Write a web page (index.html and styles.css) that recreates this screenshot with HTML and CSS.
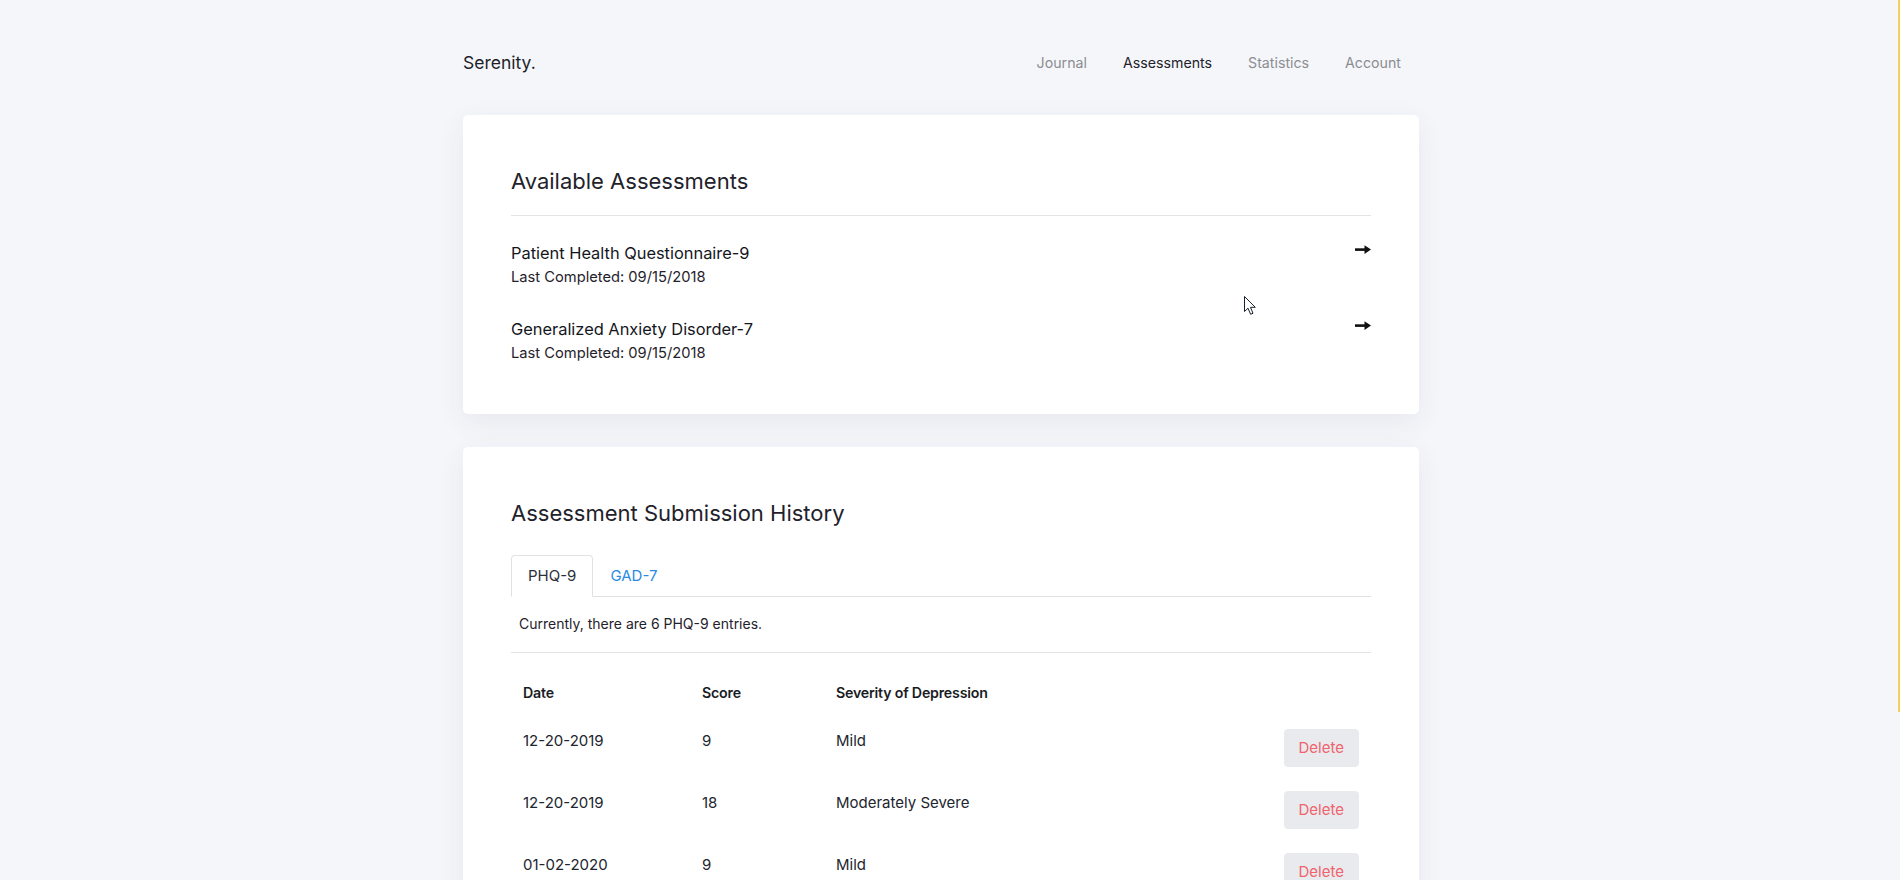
FILE: index.html
```html
<!DOCTYPE html>
<html lang="en">
<head>
<meta charset="utf-8">
<title>Serenity. — Assessments</title>
<link rel="stylesheet" href="styles.css">
</head>
<body>
<div class="page">
  <div class="container">
    <header class="topbar">
      <div class="logo">Serenity.</div>
      <nav class="nav">
        <a class="nav-link">Journal</a>
        <a class="nav-link active">Assessments</a>
        <a class="nav-link">Statistics</a>
        <a class="nav-link">Account</a>
      </nav>
    </header>

    <section class="card">
      <h2 class="card-title">Available Assessments</h2>
      <hr class="divider">
      <ul class="assess-list">
        <li class="assess-item">
          <div class="assess-text">
            <div class="assess-name">Patient Health Questionnaire-9</div>
            <div class="assess-meta">Last Completed: 09/15/2018</div>
          </div>
          <svg class="arrow" width="16" height="9" viewBox="0 0 16 9"><rect x="0" y="3.3" width="11" height="2.6" fill="#111"/><path d="M9.5 0.3 L16 4.6 L9.5 8.9 Z" fill="#111"/></svg>
        </li>
        <li class="assess-item">
          <div class="assess-text">
            <div class="assess-name">Generalized Anxiety Disorder-7</div>
            <div class="assess-meta">Last Completed: 09/15/2018</div>
          </div>
          <svg class="arrow" width="16" height="9" viewBox="0 0 16 9"><rect x="0" y="3.3" width="11" height="2.6" fill="#111"/><path d="M9.5 0.3 L16 4.6 L9.5 8.9 Z" fill="#111"/></svg>
        </li>
      </ul>
    </section>

    <section class="card">
      <h2 class="card-title">Assessment Submission History</h2>
      <div class="tabs">
        <a class="tab active">PHQ-9</a>
        <a class="tab">GAD-7</a>
      </div>
      <p class="count">Currently, there are 6 PHQ-9 entries.</p>
      <hr class="divider tight">
      <table class="history">
        <thead>
          <tr><th class="c-date">Date</th><th class="c-score">Score</th><th>Severity of Depression</th><th></th></tr>
        </thead>
        <tbody>
          <tr><td>12-20-2019</td><td>9</td><td>Mild</td><td class="c-act"><button class="btn-delete">Delete</button></td></tr>
          <tr><td>12-20-2019</td><td>18</td><td>Moderately Severe</td><td class="c-act"><button class="btn-delete">Delete</button></td></tr>
          <tr><td>01-02-2020</td><td>9</td><td>Mild</td><td class="c-act"><button class="btn-delete">Delete</button></td></tr>
          <tr><td>01-15-2020</td><td>12</td><td>Moderate</td><td class="c-act"><button class="btn-delete">Delete</button></td></tr>
          <tr><td>02-03-2020</td><td>7</td><td>Mild</td><td class="c-act"><button class="btn-delete">Delete</button></td></tr>
          <tr><td>02-20-2020</td><td>4</td><td>Minimal</td><td class="c-act"><button class="btn-delete">Delete</button></td></tr>
        </tbody>
      </table>
    </section>
  </div>
</div>

<svg class="cursor" width="13" height="20" viewBox="0 0 13 20"><path d="M0.5 0.5 L0.5 15.5 L4 12.2 L6.6 18.3 L9 17.3 L6.5 11.3 L11.3 11.3 Z" fill="#fff" stroke="#1a1f2c" stroke-width="1" stroke-linejoin="round"/></svg>
<div class="scroll-thumb"></div>
</body>
</html>
```

FILE: styles.css
```css
html {
  overflow: hidden;
}

body {
  margin: 0;
  background: #f5f6fa;
  font-family: Inter, "Noto Sans", "Liberation Sans", sans-serif;
  font-size: 15px;
  line-height: 24px;
  color: #1f222b;
}

.page {
  padding-right: 18px;
}

.container {
  width: 956px;
  margin: 0 auto;
}

.topbar {
  display: flex;
  align-items: center;
  justify-content: space-between;
  height: 48px;
  padding-top: 39px;
  margin-bottom: 28px;
}

.logo {
  font-size: 17.5px;
  color: #1c1f2a;
}

.nav {
  display: flex;
}

.nav-link {
  padding: 0 18px;
  font-size: 14.2px;
  color: #8b8d93;
  text-decoration: none;
}

.nav-link.active {
  color: #1f222b;
}

.card {
  background: #fff;
  border-radius: 5px;
  box-shadow: 0 8px 28px rgba(40, 50, 90, 0.07);
  padding: 48px 48px 48px;
  margin-bottom: 33px;
}

.card-title {
  margin: 0 0 16px;
  font-size: 22px;
  font-weight: 400;
  line-height: 36px;
  color: #1f222b;
}

.divider {
  border: 0;
  border-top: 1px solid #e3e4e8;
  margin: 0 0 25px;
}

.assess-list {
  list-style: none;
  margin: 0;
  padding: 0;
  display: flex;
  flex-direction: column;
  gap: 27px;
}

.assess-item {
  display: flex;
  justify-content: space-between;
  align-items: flex-start;
}

.assess-name {
  font-size: 16.4px;
  line-height: 24px;
  color: #14161d;
}

.assess-meta {
  font-size: 14.7px;
  line-height: 25px;
  color: #1f222b;
}

.arrow {
  margin-top: 4px;
}

.tabs {
  display: flex;
  margin-top: 24px;
  border-bottom: 1px solid #dfe1e5;
}

.tab {
  padding: 8px 16px;
  margin-bottom: -1px;
  border: 1px solid transparent;
  border-radius: 4px 4px 0 0;
  color: #2a8ae4;
  text-decoration: none;
}

.tab.active {
  color: #2b2f3a;
  border-color: #dfe1e5 #dfe1e5 #fff;
  background: #fff;
}

.count {
  margin: 15px 0 16px;
  padding-left: 8px;
  font-size: 14px;
}

.divider.tight {
  margin: 0 0 16px;
}

.history {
  width: 100%;
  border-collapse: collapse;
}

.history th {
  text-align: left;
  font-weight: 600;
  font-size: 14.2px;
  letter-spacing: -0.2px;
  padding: 12px 12px;
  color: #1a1c24;
}

.history td {
  vertical-align: top;
  padding: 12px 12px;
  color: #22252e;
}

.c-date {
  width: 155px;
}

.c-score {
  width: 110px;
}

.c-act {
  text-align: right;
}

.btn-delete {
  font-family: inherit;
  font-size: 15px;
  line-height: 24px;
  padding: 6px 14px;
  border: 1px solid #e8eaee;
  border-radius: 4px;
  background: #e8eaee;
  color: #f0636d;
}

.cursor {
  position: fixed;
  left: 1244px;
  top: 296px;
}

.scroll-thumb {
  position: fixed;
  right: 0;
  top: 0;
  width: 2px;
  height: 712px;
  background: #f6cf62;
}
```
